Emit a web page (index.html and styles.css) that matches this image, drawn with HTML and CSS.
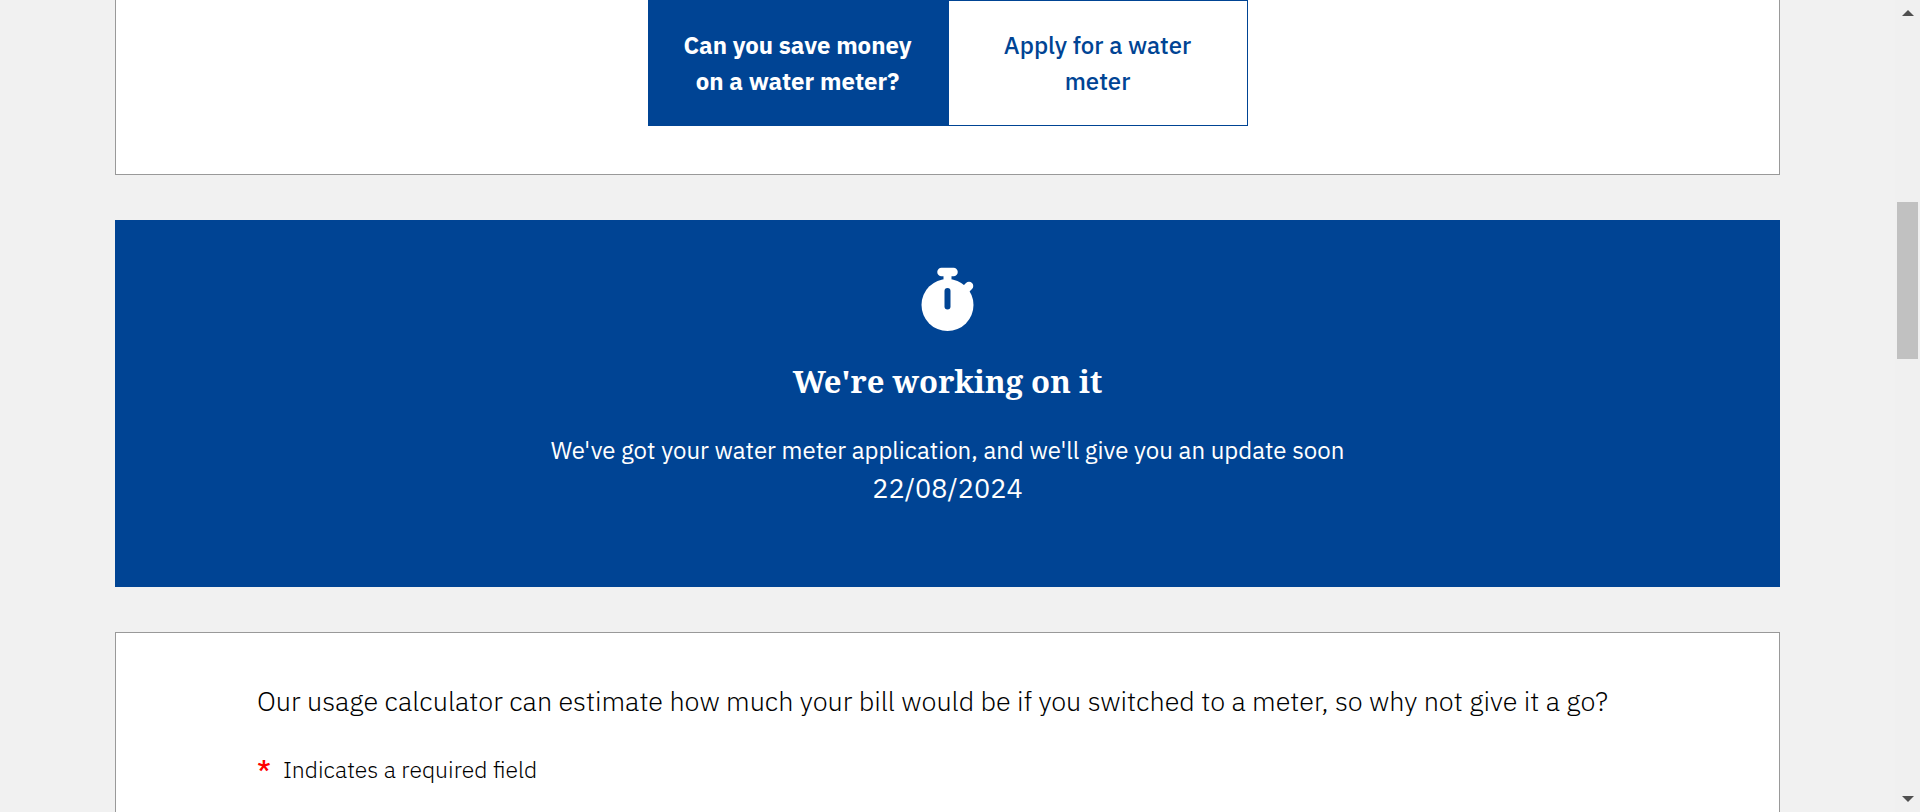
FILE: index.html
```html
<!DOCTYPE html>
<html lang="en">
<head>
<meta charset="utf-8">
<meta name="viewport" content="width=device-width, initial-scale=1">
<title>Water meter application</title>
<link rel="stylesheet" href="styles.css">
</head>
<body>
<div class="page">
  <main class="content">
    <section class="card card--top">
      <nav class="tabs">
        <button class="tab tab--active" type="button">Can you save money on a water meter?</button>
        <button class="tab" type="button">Apply for a water meter</button>
      </nav>
    </section>

    <section class="banner">
      <svg class="banner__icon" viewBox="0 0 54 66" aria-hidden="true">
        <g fill="none" stroke="#fff" stroke-linecap="round">
          <path d="M20.5 5h12" stroke-width="8.500"/>
          <path d="M26.500 6v12" stroke-width="8" stroke-linecap="butt"/>
          <path d="M44 23l4-4" stroke-width="8.500"/>
        </g>
        <circle cx="26.500" cy="38" r="26" fill="#fff"/>
        <path d="M26.500 24v15.500" fill="none" stroke="#004494" stroke-width="6" stroke-linecap="round"/>
      </svg>
      <h2 class="banner__title">We're working on it</h2>
      <p class="banner__text">We've got your water meter application, and we'll give you an update soon</p>
      <time class="banner__date" datetime="2024-08-22">22/08/2024</time>
    </section>

    <section class="card card--calculator">
      <p class="intro">Our usage calculator can estimate how much your bill would be if you switched to a meter, so why not give it a go?</p>
      <p class="required"><span class="required__mark">*</span><span>Indicates a required field</span></p>
    </section>
  </main>

  <div class="scrollbar" aria-hidden="true">
    <svg class="scrollbar__arrow" viewBox="0 0 12 6"><path d="M0 6l6-6 6 6z" fill="#505050"/></svg>
    <div class="scrollbar__track"><div class="scrollbar__thumb"></div></div>
    <svg class="scrollbar__arrow" viewBox="0 0 12 6"><path d="M0 0l6 6 6-6z" fill="#505050"/></svg>
  </div>
</div>
</body>
</html>
```
FILE: styles.css
```css
* {
  box-sizing: border-box;
}

body {
  margin: 0;
  background: #f1f1f1;
  color: #000;
  font-family: "IBM Plex Sans", Roboto, sans-serif;
  font-size: 24px;
  line-height: 36px;
}

h2,
p {
  margin: 0;
}

.page {
  display: flex;
  height: 100vh;
  overflow: hidden;
}

.content {
  flex: 1;
  display: flex;
  flex-direction: column;
  gap: 45px;
  padding: 0 115px;
}

.card {
  background: #fff;
  border: 1px solid #999;
}

.card--top {
  border-top: 0;
  padding-bottom: 48px;
}

.tabs {
  display: flex;
  max-width: 600px;
  margin: 0 auto;
}

.tab {
  flex: 1;
  padding: 26px 32px;
  border: 1px solid #004494;
  background: #fff;
  color: #004494;
  font: inherit;
  font-weight: 500;
}

.tab--active {
  background: #004494;
  color: #fff;
  font-weight: 700;
}

.banner {
  display: flex;
  flex-direction: column;
  align-items: center;
  padding: 47px 32px 79px;
  background: #004494;
  color: #fff;
  text-align: center;
}

.banner__icon {
  width: 54px;
  height: 66px;
}

.banner__title {
  margin: 24px 0 27px;
  font-family: "Roboto Slab", "Noto Serif", serif;
  font-size: 31px;
  font-weight: 700;
  line-height: 48px;
}

.banner__date {
  font-size: 27px;
  line-height: 40px;
}

.card--calculator {
  flex: 1;
  padding: 48px 141px;
}

.intro {
  margin-bottom: 30px;
  font-size: 27px;
  font-weight: 300;
  line-height: 40px;
  white-space: nowrap;
}

.required {
  display: flex;
  gap: 12px;
  font-size: 23px;
  font-weight: 300;
}

.required__mark {
  color: #f00;
  font-size: 27px;
  font-weight: 500;
}

.scrollbar {
  flex: none;
  display: flex;
  flex-direction: column;
  align-items: center;
  width: 25px;
  padding: 10px 0;
  background: #f0f0f0;
}

.scrollbar__arrow {
  width: 12px;
  height: 6px;
}

.scrollbar__track {
  flex: 1;
  align-self: stretch;
  padding: 186px 2px 0;
}

.scrollbar__thumb {
  height: 157px;
  background: #c1c1c1;
}
```
